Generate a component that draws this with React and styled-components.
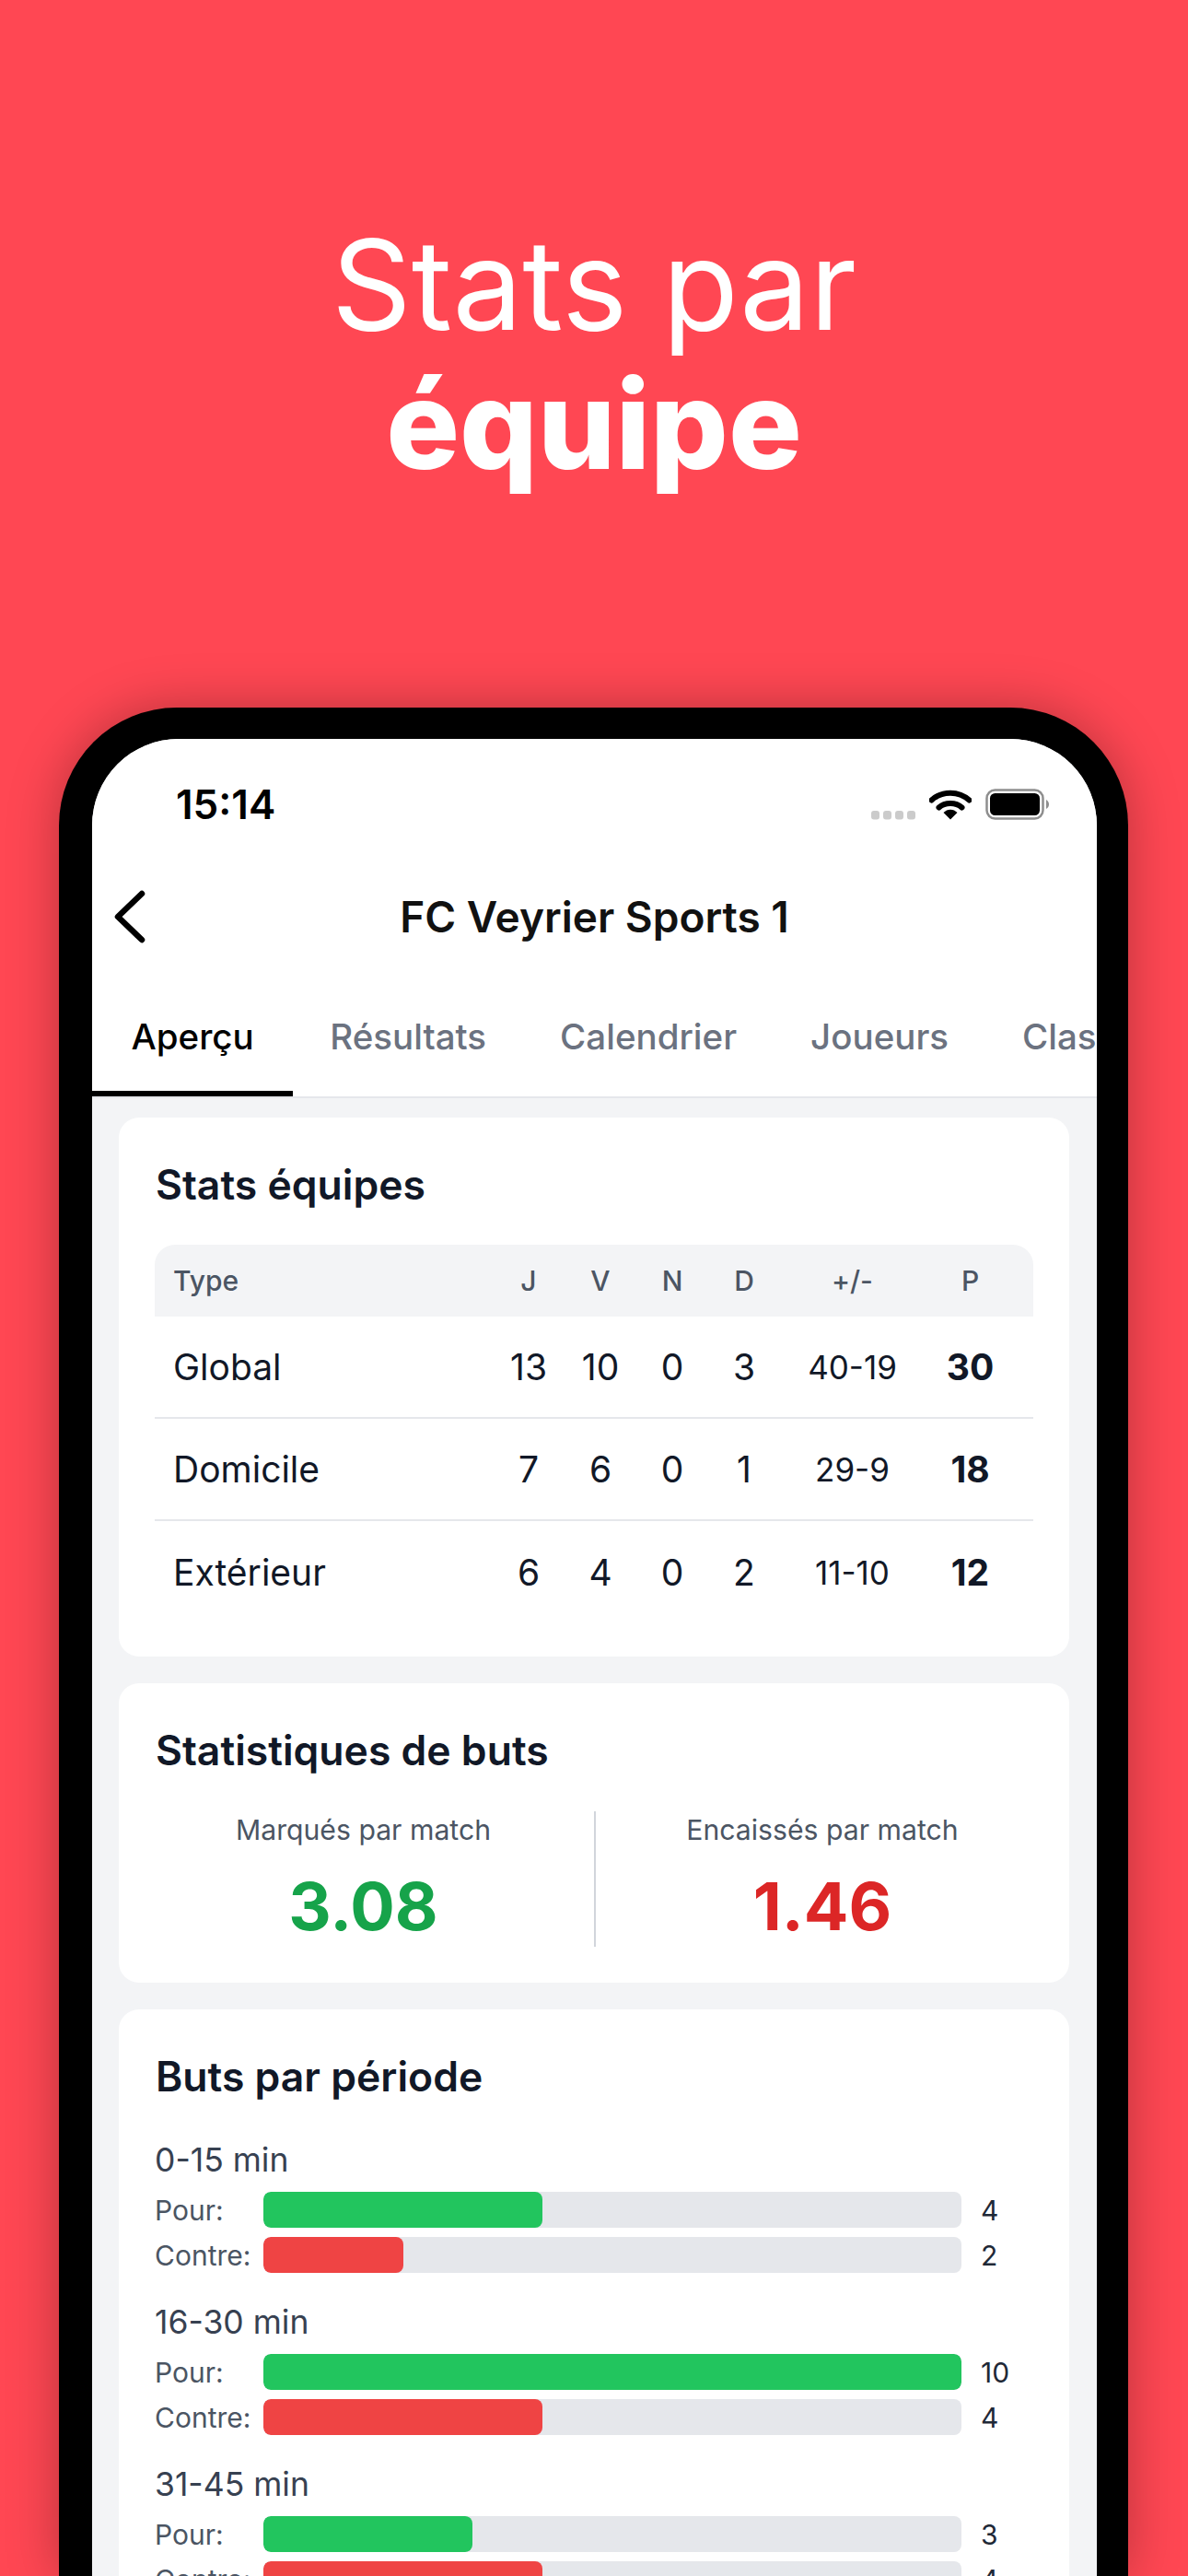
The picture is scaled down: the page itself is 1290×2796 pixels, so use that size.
import React from 'react'
import styled, { createGlobalStyle } from 'styled-components'

const GlobalStyle = createGlobalStyle`
  html, body {
    margin: 0;
    padding: 0;
    background: #ff4753;
  }
  * {
    box-sizing: border-box;
  }
`

const Page = styled.div`
  width: 1290px;
  height: 2796px;
  overflow: hidden;
  background: #ff4753;
  font-family: Inter, "Liberation Sans", sans-serif;
  display: flex;
  flex-direction: column;
`

const Hero = styled.h1`
  margin: 0;
  height: 768px;
  flex: none;
  width: 100%;
  padding-top: 233px;
  text-align: center;
  color: #fff;
  font-size: 135px;
  line-height: 152px;
  font-weight: 400;
  span {
    display: block;
    font-size: 133px;
    font-weight: 800;
  }
`

const Phone = styled.div`
  flex: none;
  width: 1161px;
  height: 2028px;
  margin-left: 64px;
  padding: 34px 34px 0 36px;
  background: #000;
  border-radius: 128px 128px 0 0;
  box-shadow: 0 0 56px rgba(0, 0, 0, 0.28);
`

const Screen = styled.div`
  height: 100%;
  background: #f3f4f6;
  border-radius: 94px 94px 0 0;
  overflow: hidden;
`

const TopArea = styled.div`
  background: #fff;
  border-bottom: 2px solid #e5e7eb;
`

const StatusBar = styled.div`
  height: 102px;
  padding: 40px 52px 0 91px;
  display: flex;
  justify-content: space-between;
  align-items: center;
`

const Clock = styled.span`
  font-size: 44px;
  font-weight: 600;
  color: #000;
`

const StatusIcons = styled.div`
  display: flex;
  align-items: center;
  gap: 15px;
`

const NavBar = styled.div`
  height: 176px;
  padding-top: 6px;
  position: relative;
  display: flex;
  align-items: center;
  justify-content: center;
  font-size: 46px;
  font-weight: 600;
  color: #111;
`

const BackIcon = styled.svg`
  position: absolute;
  left: 20px;
  top: 62px;
`

const Tabs = styled.div`
  display: flex;
  height: 110px;
  overflow: hidden;
`

const Tab = styled.div`
  flex: none;
  height: 100%;
  padding: 22px ${p => (p.$active ? '42.5px' : '40px')} 0;
  font-size: 38.5px;
  font-weight: 500;
  color: ${p => (p.$active ? '#000' : '#6b7280')};
  border-bottom: 6px solid ${p => (p.$active ? '#000' : 'transparent')};
`

const Content = styled.div`
  padding: 21px 30px 0 29px;
  display: flex;
  flex-direction: column;
  gap: 29px;
`

const Card = styled.section`
  background: #fff;
  border-radius: 22px;
  padding: ${p => p.$padding};
`

const CardTitle = styled.h2`
  margin: 0 0 0 1px;
  font-size: 44.5px;
  line-height: 58px;
  font-weight: 600;
  color: #111827;
`

const Table = styled.div`
  margin-top: 36px;
`

const TableRow = styled.div`
  display: grid;
  grid-template-columns: 1fr 78px 78px 78px 78px 157px 99px;
  padding: 0 19px 0 20px;
  align-items: center;
  text-align: center;
  height: 111px;
  color: #111827;
  font-size: 39px;
  border-bottom: 2px solid #e5e7eb;
  &:last-child {
    border-bottom: none;
  }
`

const TableHead = styled(TableRow)`
  height: 78px;
  background: #f3f4f6;
  border-radius: 22px 22px 0 0;
  border-bottom: none;
  color: #4b5563;
  font-size: 30px;
  font-weight: 500;
`

const RowLabel = styled.span`
  text-align: left;
`

const GoalCell = styled.span`
  font-size: 35px;
`

const PointCell = styled.span`
  font-weight: 700;
`

const AverageRow = styled.div`
  margin-top: 37px;
  display: grid;
  grid-template-columns: 477px 2px 1fr;
  height: 147px;
`

const Average = styled.div`
  text-align: center;
  padding: ${p => p.$padding};
`

const AverageLabel = styled.div`
  font-size: 30.2px;
  line-height: 40px;
  color: #4b5563;
`

const AverageValue = styled.div`
  margin-top: 21px;
  font-size: 72px;
  line-height: 84px;
  font-weight: 700;
  color: ${p => p.$color};
`

const VerticalRule = styled.div`
  background: #d1d5db;
`

const Period = styled.div`
  margin-top: ${p => (p.$first ? '39px' : '31px')};
`

const PeriodLabel = styled.div`
  font-size: 35.5px;
  line-height: 46px;
  margin-bottom: 11px;
  color: #374151;
`

const BarRow = styled.div`
  display: flex;
  align-items: center;
  height: 39px;
  margin-bottom: 10px;
`

const BarLabel = styled.span`
  width: 118px;
  flex: none;
  font-size: 30px;
  color: #4b5563;
`

const BarTrack = styled.div`
  width: 758px;
  height: 39px;
  flex: none;
  background: #e5e7eb;
  border-radius: 8px;
  overflow: hidden;
`

const BarFill = styled.div`
  height: 100%;
  border-radius: 8px;
  background: ${p => p.$color};
`

const BarValue = styled.span`
  margin-left: 21px;
  font-size: 30px;
  color: #1f2937;
`

const Wifi = () => (
  <svg width="46" height="34" viewBox="0 0 46 34">
    <path d="M2.5 12.5C14 2 32 2 43.5 12.5" fill="none" stroke="#000" strokeWidth="6" strokeLinecap="round" />
    <path d="M10.5 20.5C17 14.5 29 14.5 35.5 20.5" fill="none" stroke="#000" strokeWidth="6" strokeLinecap="round" />
    <path d="M15.5 26C19.5 21.5 26.5 21.5 30.5 26L23 33.5Z" fill="#000" />
  </svg>
)

const Battery = () => (
  <svg width="69" height="34" viewBox="0 0 69 34">
    <rect x="1.5" y="1.5" width="61" height="31" rx="9" fill="none" stroke="#8e8e8e" strokeWidth="2.5" />
    <rect x="5" y="5" width="54" height="24" rx="5.5" fill="#000" />
    <path d="M66 12C68 13 69 15 69 17C69 19 68 21 66 22Z" fill="#8e8e8e" />
  </svg>
)

const SignalDots = () => (
  <svg width="48" height="10" viewBox="0 0 48 10" style={{ marginTop: 24 }}>
    {[0, 13, 26, 39].map(x => (
      <rect key={x} x={x} width="9" height="9.5" rx="3" fill="#cbcbcb" />
    ))}
  </svg>
)

const teamRows = [
  ['Global', '13', '10', '0', '3', '40-19', '30'],
  ['Domicile', '7', '6', '0', '1', '29-9', '18'],
  ['Extérieur', '6', '4', '0', '2', '11-10', '12'],
]

const periods = [
  { label: '0-15 min', scored: 4, conceded: 2 },
  { label: '16-30 min', scored: 10, conceded: 4 },
  { label: '31-45 min', scored: 3, conceded: 4 },
]

const GoalBar = ({ label, value, color }) => (
  <BarRow>
    <BarLabel>{label}</BarLabel>
    <BarTrack>
      <BarFill $color={color} style={{ width: `${value * 10}%` }} />
    </BarTrack>
    <BarValue>{value}</BarValue>
  </BarRow>
)

const App = () => {
  return (
    <Page>
      <GlobalStyle />
      <Hero>
        Stats par
        <span>équipe</span>
      </Hero>
      <Phone>
        <Screen>
          <TopArea>
            <StatusBar>
              <Clock>15:14</Clock>
              <StatusIcons>
                <SignalDots />
                <Wifi />
                <Battery />
              </StatusIcons>
            </StatusBar>
            <NavBar>
              <BackIcon width="40" height="58" viewBox="0 0 40 58">
                <path d="M34 4L8 29L34 54" fill="none" stroke="#000" strokeWidth="6.5" strokeLinecap="round" strokeLinejoin="round" />
              </BackIcon>
              FC Veyrier Sports 1
            </NavBar>
            <Tabs>
              <Tab $active>Aperçu</Tab>
              <Tab>Résultats</Tab>
              <Tab>Calendrier</Tab>
              <Tab>Joueurs</Tab>
              <Tab>Classement</Tab>
            </Tabs>
          </TopArea>
          <Content>
            <Card $padding="44px 39px 36px 39px">
              <CardTitle>Stats équipes</CardTitle>
              <Table>
                <TableHead>
                  <RowLabel>Type</RowLabel>
                  <span>J</span>
                  <span>V</span>
                  <span>N</span>
                  <span>D</span>
                  <span>+/-</span>
                  <span>P</span>
                </TableHead>
                {teamRows.map(row => (
                  <TableRow key={row[0]}>
                    <RowLabel>{row[0]}</RowLabel>
                    <span>{row[1]}</span>
                    <span>{row[2]}</span>
                    <span>{row[3]}</span>
                    <span>{row[4]}</span>
                    <GoalCell>{row[5]}</GoalCell>
                    <PointCell>{row[6]}</PointCell>
                  </TableRow>
                ))}
              </Table>
            </Card>
            <Card $padding="44px 39px 39px 39px">
              <CardTitle>Statistiques de buts</CardTitle>
              <AverageRow>
                <Average $padding="0 24px 0 0">
                  <AverageLabel>Marqués par match</AverageLabel>
                  <AverageValue $color="#16a34a">3.08</AverageValue>
                </Average>
                <VerticalRule />
                <Average $padding="0 0 0 17px">
                  <AverageLabel>Encaissés par match</AverageLabel>
                  <AverageValue $color="#dc2626">1.46</AverageValue>
                </Average>
              </AverageRow>
            </Card>
            <Card $padding="44px 39px 39px 39px">
              <CardTitle>Buts par période</CardTitle>
              {periods.map((period, i) => (
                <Period key={period.label} $first={i === 0}>
                  <PeriodLabel>{period.label}</PeriodLabel>
                  <GoalBar label="Pour:" value={period.scored} color="#22c55e" />
                  <GoalBar label="Contre:" value={period.conceded} color="#ef4444" />
                </Period>
              ))}
            </Card>
          </Content>
        </Screen>
      </Phone>
    </Page>
  )
}

export default App
